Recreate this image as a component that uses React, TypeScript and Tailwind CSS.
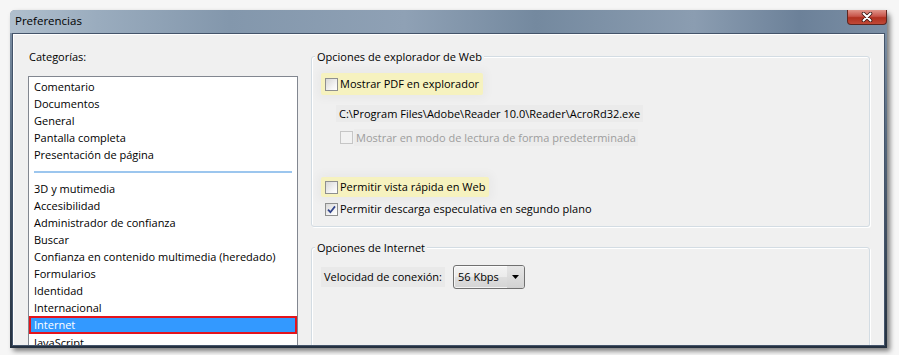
import React from "react";

const categoriesTop = ["Comentario", "Documentos", "General", "Pantalla completa", "Presentación de página"];
const categoriesBottom = [
  "3D y mutimedia",
  "Accesibilidad",
  "Administrador de confianza",
  "Buscar",
  "Confianza en contenido multimedia (heredado)",
  "Formularios",
  "Identidad",
  "Internacional",
  "Internet",
  "JavaScript",
];

function CheckBox({ checked = false, disabled = false }: { checked?: boolean; disabled?: boolean }) {
  return (
    <span
      className={`flex h-[13px] w-[13px] shrink-0 items-center justify-center border ${
        disabled ? "border-[#c6c6c6] bg-[#f4f4f4]" : "border-[#8e8f8f] bg-white"
      }`}
    >
      <span
        className={`flex h-[11px] w-[11px] items-center justify-center ${
          disabled ? "bg-[#f2f2f2]" : "bg-[linear-gradient(135deg,#d8d8d8,#f6f6f6_70%,#ffffff)]"
        }`}
      >
        {checked && (
          <svg width="11" height="11" viewBox="0 0 11 11">
            <path d="M2 5.6 L4.4 8.2 L9 2.4" fill="none" stroke="#31438a" strokeWidth="1.7" />
          </svg>
        )}
      </span>
    </span>
  );
}

function GroupBox({ title, className, children }: { title: string; className?: string; children: React.ReactNode }) {
  return (
    <fieldset
      className={`rounded-[3px] border border-[#d3dce3] shadow-[inset_1px_1px_0_#ffffff,1px_1px_0_#ffffff] ${className ?? ""}`}
    >
      <legend className="ml-[3px] bg-[#f0f0f0] px-[2px] leading-[17px]">{title}</legend>
      {children}
    </fieldset>
  );
}

export default function App() {
  return (
    <div className="h-[355px] w-[899px] overflow-hidden bg-[#f6f6f6] pl-[10px] pt-[10px] font-['Open_Sans',sans-serif] text-[11px] text-black">
      <div className="flex h-[338px] w-[877px] flex-col rounded-t-[5px] bg-[linear-gradient(180deg,#8396ab,#53657a_40%,#253140)] shadow-[3px_3px_5px_rgba(0,0,0,0.5)]">
        {/* title bar */}
        <div className="flex h-[23px] shrink-0 items-start justify-between rounded-t-[5px] bg-[linear-gradient(90deg,#b0bfcd_0%,#9aacbe_10%,#8397ac_25%,#8fa1b5_45%,#74899f_60%,#8b9db1_78%,#6c8199_90%,#7b8fa5_100%)]">
          <span className="self-center pb-[1px] pl-[5px] text-[11.5px] text-black">Preferencias</span>
          <div className="flex h-[15px] w-[40px] items-center justify-center rounded-b-[4px] border border-t-0 border-[#5e2620] bg-[linear-gradient(180deg,#e0958a,#c8554a_45%,#b0301f_55%,#c04a38)]">
            <svg width="12" height="10" viewBox="0 0 12 10">
              <path d="M2.5 1.5 L9.5 8.5 M9.5 1.5 L2.5 8.5" stroke="#3a1712" strokeWidth="3.6" strokeLinecap="round" />
              <path d="M2.5 1.5 L9.5 8.5 M9.5 1.5 L2.5 8.5" stroke="#ffffff" strokeWidth="2" strokeLinecap="round" />
            </svg>
          </div>
        </div>

        {/* body */}
        <div className="flex min-h-0 flex-1 px-[2px] pb-[2px]">
          <div className="flex min-h-0 flex-1 gap-[13px] overflow-hidden border border-[#44546a] bg-[#f0f0f0] pl-[15px] pr-[12px] pt-[14px] shadow-[inset_1px_1px_0_#ffffff]">
            {/* categories */}
            <div className="flex w-[270px] shrink-0 flex-col">
              <span className="pl-[1px] leading-[17px]">Categorías:</span>
              <div className="mt-[11px] h-[300px] shrink-0 border border-[#828790] bg-white pt-[1px]">
                {categoriesTop.map((c) => (
                  <div key={c} className="h-[17px] pl-[5px] leading-[17px]">
                    {c}
                  </div>
                ))}
                <div className="flex h-[17px] items-center px-[5px]">
                  <div className="h-[2px] flex-1 bg-[#9cc6ee]" />
                </div>
                {categoriesBottom.map((c) =>
                  c === "Internet" ? (
                    <div
                      key={c}
                      className="h-[18px] border-2 border-[#e5141c] bg-[#3399ff] pl-[3px] leading-[14px] text-white"
                    >
                      {c}
                    </div>
                  ) : (
                    <div key={c} className="h-[17px] pl-[5px] leading-[17px]">
                      {c}
                    </div>
                  )
                )}
              </div>
            </div>

            {/* options */}
            <div className="flex w-[559px] shrink-0 flex-col">
              <GroupBox title="Opciones de explorador de Web" className="shrink-0">
                <div className="flex flex-col items-start pb-[8px] pt-[8px]">
                  <div className="ml-[9px] flex h-[22px] items-center gap-[2px] rounded-[2px] bg-[#f6f2bf] pl-[4px] pr-[4px] shadow-[0_0_10px_4px_rgba(0,0,0,0.03)]">
                    <CheckBox />
                    <span>Mostrar PDF en explorador</span>
                  </div>
                  <span className="ml-[24px] mt-[10px] bg-[#ebebeb] px-[3px] leading-[17px]">
                    C:\Program Files\Adobe\Reader 10.0\Reader\AcroRd32.exe
                  </span>
                  <div className="ml-[28px] mt-[7px] flex h-[17px] items-center gap-[1px]">
                    <CheckBox disabled />
                    <span className="bg-[#ececec] px-[2px] leading-[17px] text-[#9d9d9d]">
                      Mostrar en modo de lectura de forma predeterminada
                    </span>
                  </div>
                  <div className="ml-[9px] mt-[31px] flex h-[20px] items-center gap-[2px] rounded-[2px] bg-[#f6f2bf] pl-[4px] pr-[4px] shadow-[0_0_10px_4px_rgba(0,0,0,0.03)]">
                    <CheckBox />
                    <span>Permitir vista rápida en Web</span>
                  </div>
                  <div className="ml-[13px] mt-[4px] flex h-[17px] items-center gap-[2px]">
                    <CheckBox checked />
                    <span>Permitir descarga especulativa en segundo plano</span>
                  </div>
                </div>
              </GroupBox>

              <GroupBox title="Opciones de Internet" className="mt-[12px] h-[130px] shrink-0">
                <div className="flex items-center pt-[9px]">
                  <span className="ml-[9px] bg-[#e9e9e9] px-[3px] leading-[20px]">Velocidad de conexión:</span>
                  <div className="ml-[8px] flex h-[24px] w-[72px] items-stretch overflow-hidden rounded-[3px] border border-[#707070] bg-[linear-gradient(180deg,#f3f3f3,#ebebeb_50%,#dedede_51%,#d4d4d4)] shadow-[inset_0_0_0_1px_rgba(255,255,255,0.7)]">
                    <span className="flex flex-1 items-center pl-[4px]">56 Kbps</span>
                    <span className="flex w-[17px] items-center justify-center bg-[linear-gradient(180deg,#e6e6e6,#d2d2d2)]">
                      <svg width="7" height="4" viewBox="0 0 7 4">
                        <path d="M0 0 H7 L3.5 4 Z" fill="#000000" />
                      </svg>
                    </span>
                  </div>
                </div>
              </GroupBox>
            </div>
          </div>
        </div>
      </div>
    </div>
  );
}
